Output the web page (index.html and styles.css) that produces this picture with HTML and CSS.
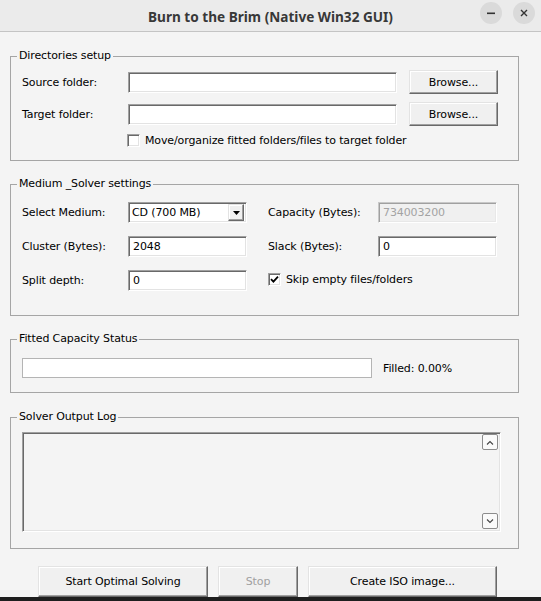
FILE: index.html
```html
<!DOCTYPE html>
<html>
<head>
<meta charset="utf-8">
<title>Burn to the Brim</title>
<link rel="stylesheet" href="styles.css">
</head>
<body>
<div class="titlebar">
  <div></div>
  <div class="title">Burn to the Brim (Native Win32 GUI)</div>
  <div class="wbtns">
    <span class="wbtn"><svg width="10" height="10" viewBox="0 0 10 10"><rect x="1" y="4.5" width="8" height="1.6" fill="#333"/></svg></span>
    <span class="wbtn"><svg width="10" height="10" viewBox="0 0 10 10"><path d="M2 2 L8 8 M8 2 L2 8" stroke="#333" stroke-width="1.4"/></svg></span>
  </div>
</div>

<div class="main">
  <div class="group g1">
    <span class="gtitle">Directories setup</span>
    <div class="drow">
      <span class="lbl">Source folder:</span>
      <span class="edit wide"></span>
      <span class="btn browse">Browse...</span>
    </div>
    <div class="drow">
      <span class="lbl">Target folder:</span>
      <span class="edit wide"></span>
      <span class="btn browse">Browse...</span>
    </div>
    <div class="crow move">
      <span class="cbox"></span>
      <span>Move/organize fitted folders/files to target folder</span>
    </div>
  </div>

  <div class="group g2">
    <span class="gtitle">Medium _Solver settings</span>
    <div class="sgrid">
      <span class="lbl">Select Medium:</span>
      <span class="select"><span class="seltext">CD (700 MB)</span><span class="selbtn"><svg width="7" height="4" viewBox="0 0 7 4"><path d="M0 0 H7 L3.5 4 Z" fill="#000"/></svg></span></span>
      <span class="lbl">Capacity (Bytes):</span>
      <span class="edit disabled">734003200</span>

      <span class="lbl">Cluster (Bytes):</span>
      <span class="edit">2048</span>
      <span class="lbl">Slack (Bytes):</span>
      <span class="edit">0</span>

      <span class="lbl">Split depth:</span>
      <span class="edit">0</span>
      <span class="crow skip"><span class="cbox checked"><svg width="9" height="9" viewBox="0 0 9 9"><path d="M1 4.2 L3.4 6.6 L8 1.6" stroke="#000" stroke-width="1.8" fill="none"/></svg></span><span>Skip empty files/folders</span></span>
    </div>
  </div>

  <div class="group g3">
    <span class="gtitle">Fitted Capacity Status</span>
    <div class="prow">
      <span class="progress"></span>
      <span>Filled: 0.00%</span>
    </div>
  </div>

  <div class="group g4">
    <span class="gtitle">Solver Output Log</span>
    <div class="log">
      <div class="logtext"></div>
      <div class="scroll">
        <span class="sbtn"><svg width="8" height="5" viewBox="0 0 8 5"><path d="M1 4.5 L4 1.5 L7 4.5" stroke="#444" stroke-width="1.1" fill="none"/></svg></span>
        <span class="sbtn"><svg width="8" height="5" viewBox="0 0 8 5"><path d="M1 0.5 L4 3.5 L7 0.5" stroke="#444" stroke-width="1.1" fill="none"/></svg></span>
      </div>
    </div>
  </div>

  <div class="actions">
    <span class="btn start">Start Optimal Solving</span>
    <span class="btn stop disabled">Stop</span>
    <span class="btn iso">Create ISO image...</span>
  </div>
</div>
<div class="edge"></div>
</body>
</html>
```
FILE: styles.css
```css
html, body {
  margin: 0;
  padding: 0;
}
body {
  width: 541px;
  height: 601px;
  overflow: hidden;
  background: #f4f4f4;
  font-family: "DejaVu Sans", "Liberation Sans", sans-serif;
  font-size: 11px;
  letter-spacing: -0.12px;
  color: #000;
}
.titlebar {
  height: 31px;
  border-bottom: 1px solid #c4c4c4;
  background: #ebebeb;
  display: grid;
  grid-template-columns: 1fr auto 1fr;
  align-items: center;
}
.title {
  font-family: "Noto Sans", "DejaVu Sans", sans-serif;
  font-weight: 700;
  font-size: 13.6px;
  letter-spacing: 0;
  color: #383838;
  padding-top: 1px;
}
.wbtns {
  display: flex;
  justify-content: flex-end;
  align-self: start;
  gap: 11px;
  padding: 2px 6px 0 0;
}
.wbtn {
  width: 22px;
  height: 22px;
  border-radius: 50%;
  background: #dadada;
  display: flex;
  align-items: center;
  justify-content: center;
}
.main {
  padding: 24px 22px 0 10px;
}
.group {
  position: relative;
  border: 1px solid #a5a5a5;
}
.group + .group {
  margin-top: 23px;
}
.group.g4 {
  margin-top: 24px;
}
.gtitle {
  position: absolute;
  top: -8px;
  left: 6px;
  padding: 0 2px;
  background: #f4f4f4;
  line-height: 14px;
}
.lbl {
  white-space: nowrap;
}
.g1 {
  padding: 13px 19px 13px 11px;
}
.drow {
  display: flex;
  align-items: center;
  height: 24px;
  margin-bottom: 8px;
}
.drow .lbl {
  width: 106px;
}
.edit {
  box-sizing: border-box;
  height: 21px;
  background: #fff;
  border: 1px solid;
  border-color: #a0a0a0 #fff #fff #a0a0a0;
  box-shadow: inset 1px 1px 0 #696969, inset -1px -1px 0 #e3e3e3;
  padding: 0 4px;
  display: flex;
  align-items: center;
  white-space: nowrap;
}
.edit.wide {
  width: 269px;
  height: 21px;
}
.btn {
  box-sizing: border-box;
  background: #f0f0f0;
  border: 1px solid;
  border-color: #e3e3e3 #696969 #696969 #e3e3e3;
  box-shadow: inset -1px -1px 0 #a0a0a0, inset 1px 1px 0 #fff;
  display: flex;
  align-items: center;
  justify-content: center;
  white-space: nowrap;
}
.btn.disabled {
  color: #a0a0a0;
}
.browse {
  width: 89px;
  height: 24px;
  margin-left: 12px;
}
.crow {
  display: flex;
  align-items: center;
  gap: 5px;
  white-space: nowrap;
}
.move {
  margin-left: 105px;
  margin-top: 1px;
  height: 13px;
}
.cbox {
  box-sizing: border-box;
  width: 13px;
  height: 13px;
  background: #fff;
  border: 1px solid;
  border-color: #a0a0a0 #fff #fff #a0a0a0;
  box-shadow: inset 1px 1px 0 #696969, inset -1px -1px 0 #e3e3e3;
  display: flex;
  align-items: center;
  justify-content: center;
  flex: none;
}
.g2 {
  padding: 17px 20px 24px 11px;
}
.sgrid {
  display: grid;
  grid-template-columns: 106px 119px 21px 110px 119px;
  grid-auto-rows: 21px;
  row-gap: 13px;
  align-items: center;
}
.sgrid > :nth-child(3),
.sgrid > :nth-child(7) {
  grid-column: 4;
}
.sgrid > .skip {
  grid-column: 4 / 6;
  margin-top: -2px;
}
.select {
  box-sizing: border-box;
  height: 21px;
  background: #fff;
  border: 1px solid;
  border-color: #a0a0a0 #fff #fff #a0a0a0;
  box-shadow: inset 1px 1px 0 #696969, inset -1px -1px 0 #e3e3e3;
  display: flex;
  align-items: center;
  padding: 2px 2px 2px 3px;
}
.seltext {
  flex: 1;
  white-space: nowrap;
}
.selbtn {
  box-sizing: border-box;
  width: 16px;
  height: 17px;
  background: #f0f0f0;
  border: 1px solid;
  border-color: #e3e3e3 #696969 #696969 #e3e3e3;
  box-shadow: inset -1px -1px 0 #a0a0a0, inset 1px 1px 0 #fff;
  display: flex;
  align-items: center;
  justify-content: center;
}
.edit.disabled {
  background: #f0f0f0;
  color: #a3a3a3;
  border-color: #c8c8c8 #fff #fff #c8c8c8;
  box-shadow: inset 1px 1px 0 #a0a0a0, inset -1px -1px 0 #e8e8e8;
}
.g3 {
  padding: 18px 11px 14px 11px;
}
.prow {
  display: flex;
  align-items: center;
  gap: 11px;
}
.progress {
  box-sizing: border-box;
  width: 350px;
  height: 20px;
  background: #fff;
  border: 1px solid #b4b4b4;
}
.g4 {
  padding: 14px 17px 16px 11px;
}
.log {
  box-sizing: border-box;
  height: 100px;
  display: flex;
  border: 1px solid;
  border-color: #a0a0a0 #fff #fff #a0a0a0;
  box-shadow: inset 1px 1px 0 #696969, inset -1px -1px 0 #e3e3e3;
  background: #f4f4f4;
  padding: 1px 1px 1px 2px;
}
.logtext {
  flex: 1;
}
.scroll {
  width: 17px;
  display: flex;
  flex-direction: column;
  justify-content: space-between;
  align-items: flex-start;
  padding-bottom: 1px;
}
.sbtn {
  box-sizing: border-box;
  width: 16px;
  height: 16px;
  border: 1px solid #8c8c8c;
  border-radius: 2px;
  background: #fafafa;
  display: flex;
  align-items: center;
  justify-content: center;
}
.actions {
  display: flex;
  gap: 10px;
  margin-top: 17px;
  padding-left: 28px;
}
.actions .btn {
  height: 31px;
}
.start { width: 170px; }
.stop { width: 80px; }
.iso { width: 189px; }
.edge {
  height: 4px;
  background: #1e1e1e;
}
```
